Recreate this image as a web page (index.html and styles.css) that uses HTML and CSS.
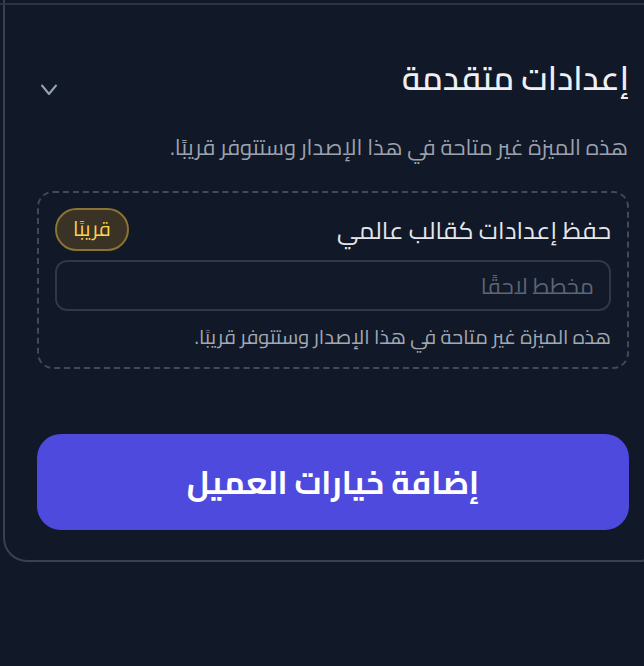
FILE: index.html
```html
<!DOCTYPE html>
<html lang="ar">
<head><meta charset="utf-8"><link rel="stylesheet" href="styles.css"></head>
<body>
<div class="viewport">
  <div class="top-line"></div>
  <section class="card" dir="rtl">
    <div class="header">
      <h2 class="title">إعدادات متقدمة</h2>
      <svg class="chevron" width="18" height="13" viewBox="0 0 18 13" aria-hidden="true"><path d="M2 2.5 L9 11 L16 2.5" fill="none" stroke="#94a3b8" stroke-width="2" stroke-linecap="round" stroke-linejoin="round"/></svg>
    </div>
    <p class="subtitle">هذه الميزة غير متاحة في هذا الإصدار وستتوفر قريبًا.</p>
    <div class="feature">
      <div class="feature-head">
        <span class="label">حفظ إعدادات كقالب عالمي</span>
        <span class="badge">قريبًا</span>
      </div>
      <div class="input"><span class="placeholder">مخطط لاحقًا</span></div>
      <p class="hint">هذه الميزة غير متاحة في هذا الإصدار وستتوفر قريبًا.</p>
    </div>
    <button class="primary">إضافة خيارات العميل</button>
  </section>
</div>
</body>
</html>
```
FILE: styles.css
```css
html, body {
  margin: 0;
  padding: 0;
  background: #111827;
}
body {
  font-family: "Cairo", "Noto Sans", sans-serif;
  color: #f3f4f6;
}
.viewport {
  position: relative;
  width: 644px;
  height: 666px;
  overflow: hidden;
  padding-left: 3px;
  box-sizing: border-box;
}
.top-line {
  position: absolute;
  left: 0;
  top: 3px;
  width: 644px;
  height: 2px;
  background: #2b3546;
}
.card {
  box-sizing: border-box;
  width: 660px;
  flex-shrink: 0;
  border: 2px solid #374151;
  border-top: none;
  border-radius: 0 0 24px 24px;
  padding: 56px 32px 30px 32px;
}
.header {
  display: flex;
  justify-content: space-between;
  align-items: flex-start;
}
.title {
  margin: 0;
  font-size: 33px;
  font-weight: 600;
  line-height: 44px;
  color: #eef0f4;
}
.chevron {
  margin-top: 27px;
  margin-left: 3px;
  display: block;
}
.subtitle {
  margin: 31px 0 0 0;
  font-size: 22px;
  line-height: 32px;
  color: #9ca3af;
  padding-right: 1px;
}
.feature {
  margin-top: 28px;
  border: 2px dashed #3f4a5c;
  border-radius: 16px;
  padding: 15px 16px 15px 16px;
}
.feature-head {
  display: flex;
  justify-content: space-between;
  align-items: center;
}
.label {
  font-size: 24.4px;
  line-height: 32px;
  color: #e5e7eb;
}
.badge {
  box-sizing: border-box;
  height: 43px;
  padding: 0 16px;
  display: flex;
  align-items: center;
  border: 2px solid #8a7233;
  background: #3a3224;
  border-radius: 999px;
  color: #fcd34d;
  font-size: 20.5px;
  line-height: 1;
}
.input {
  margin-top: 9px;
  box-sizing: border-box;
  height: 51px;
  border: 2px solid #2f3846;
  border-radius: 12px;
  background: #121a29;
  display: flex;
  align-items: center;
  padding: 0 15px;
}
.placeholder {
  font-size: 22px;
  color: #5d6675;
  line-height: 30px;
}
.hint {
  margin: 11px 0 0 0;
  font-size: 20px;
  line-height: 30px;
  color: #a3a9b4;
}
.primary {
  display: block;
  width: 100%;
  margin-top: 65px;
  height: 96px;
  border: none;
  border-radius: 24px;
  background: #4d4add;
  color: #ffffff;
  font-family: "Cairo", "Noto Sans", sans-serif;
  font-size: 32px;
  font-weight: 700;
}
```
